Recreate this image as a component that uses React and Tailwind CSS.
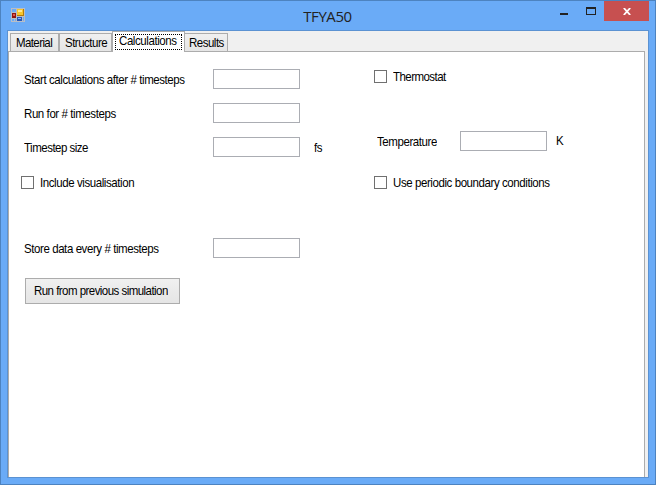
import React from "react";

function Label({ children, className = "" }) {
  return <span className={`block origin-center scale-y-[1.09] whitespace-pre leading-[14px] ${className}`}>{children}</span>;
}

function Field({ label, labelClass = "", unit, className = "" }) {
  return (
    <div className={`flex h-5 ${className}`}>
      <Label className={`mt-1 w-[189px] shrink-0 ${labelClass}`}>{label}</Label>
      <input className="h-5 w-[87px] border border-[#abadb3] bg-white outline-none" />
      {unit && <Label className="ml-3.5 mt-1">{unit}</Label>}
    </div>
  );
}

function Check({ label, className = "", labelClass = "" }) {
  return (
    <label className={`flex h-[13px] items-center ${className}`}>
      <span className="size-[13px] border border-[#707070] bg-white" />
      <Label className={`ml-1.5 ${labelClass}`}>{label}</Label>
    </label>
  );
}

function AppIcon() {
  return (
    <svg width="14" height="14" viewBox="0 0 14 14" shapeRendering="crispEdges">
      <path fill="#b9bec6" d="M0 0h14v14H0z" />
      <path fill="#6aabf7" d="M1 1h4v3H1zM1 11h2v2H1zM4 11h1v2H4z" />
      <path fill="#8f1512" d="M1 5h4v5H1z" />
      <path fill="#e0564c" d="M2 6h2v2H2z" />
      <path fill="#b57b08" d="M6 1h7v7H6z" />
      <path fill="#f7c62c" d="M6 1h6v6H6z" />
      <path fill="#ffe891" d="M7 2h4v2H7z" />
      <path fill="#2858b8" d="M6 9h5v4H6z" />
      <path fill="#8bb5f5" d="M7 10h3v1H7z" />
      <path fill="#6aabf7" d="M12 9h1v4h-1z" />
    </svg>
  );
}

export default function App() {
  return (
    <div className="flex h-[485px] w-[656px] flex-col border border-[#4d83c0] bg-[#6aabf7] px-1.5 pb-1.5 font-['Liberation_Sans',Arial,sans-serif] text-[11.5px] tracking-[-0.42px] text-black">
      <header className="flex h-[29px] shrink-0">
        <div className="w-[200px] pl-1 pt-[7px]"><AppIcon /></div>
        <h1 className="flex-1 pt-[5px] text-center font-['Open_Sans',sans-serif] text-[15px] leading-5 tracking-[-0.4px] text-[#222]">
          <span className="mr-px">TFYA50</span>
        </h1>
        <div className="flex w-[200px] justify-end">
          <svg width="44" height="20" shapeRendering="crispEdges">
            <path fill="#222" d="M0 12h8v2H0z" />
            <path fill="#222" fillRule="evenodd" d="M26 6h10v8H26zM27 8v5h8V8z" />
          </svg>
          <button className="flex h-5 w-[45px] items-center justify-center bg-[#c75050]">
            <svg width="8" height="7" viewBox="0 0 8 7" className="mt-px" aria-label="Close">
              <path d="M.8 0 7.2 7M7.2 0 .8 7" stroke="white" strokeWidth="1.8" />
            </svg>
          </button>
        </div>
      </header>
      <main className="flex flex-1 flex-col border border-[#5b92d2] bg-[#f0f0f0]">
        <nav className="flex h-5 shrink-0 items-end pl-0.5">
          <div className="h-[18px] w-[49px] border border-b-0 border-[#acacac] bg-linear-to-b from-[#f0f0f0] to-[#e5e5e5] pl-[5px] pt-0.5"><Label className="tracking-[-0.6px]">Material</Label></div>
          <div className="h-[18px] w-[53px] border border-b-0 border-[#acacac] bg-linear-to-b from-[#f0f0f0] to-[#e5e5e5] pl-[5px] pt-0.5"><Label className="tracking-[-0.5px]">Structure</Label></div>
          <div className="z-10 -mb-px h-[21px] w-[73px] border border-b-0 border-[#acacac] bg-white px-0.5 pt-0.5">
            <div className="h-4 border border-dotted border-black pl-[3px]"><Label className="-mt-px">Calculations</Label></div>
          </div>
          <div className="-ml-px h-[18px] w-[44px] border border-b-0 border-[#acacac] bg-linear-to-b from-[#f0f0f0] to-[#e5e5e5] pl-1 pt-0.5"><Label className="tracking-[-0.5px]">Results</Label></div>
        </nav>
        <section className="mr-[3px] flex flex-1 border border-b-0 border-[#acacac] bg-white">
          <div className="w-[365px] pl-[15px] pt-[17px]">
            <Field label="Start calculations after # timesteps" />
            <Field label="Run for # timesteps" className="mt-3.5" />
            <Field label="Timestep size" labelClass="tracking-[-0.5px]" unit="fs" className="mt-3.5" />
            <Check label="Include visualisation" className="-ml-[3px] mt-[19px]" />
            <Field label="Store data every # timesteps" className="mt-[49px]" />
            <button className="ml-px mt-5 flex h-[26px] w-[155px] items-center border border-[#acacac] bg-linear-to-b from-[#f0f0f0] to-[#e5e5e5] pl-2">
              <Label className="tracking-[-0.54px]">Run from previous simulation</Label>
            </button>
          </div>
          <div className="flex-1 pt-[18px]">
            <Check label="Thermostat" labelClass="tracking-[-0.55px]" />
            <div className="ml-[3px] mt-12 flex h-5">
              <Label className="mt-1 w-[83px]">Temperature</Label>
              <input className="h-5 w-[87px] border border-[#abadb3] bg-white outline-none" />
              <Label className="ml-[9px] mt-[3px]">K</Label>
            </div>
            <Check label="Use periodic boundary conditions" className="mt-[25px]" />
          </div>
        </section>
      </main>
    </div>
  );
}
